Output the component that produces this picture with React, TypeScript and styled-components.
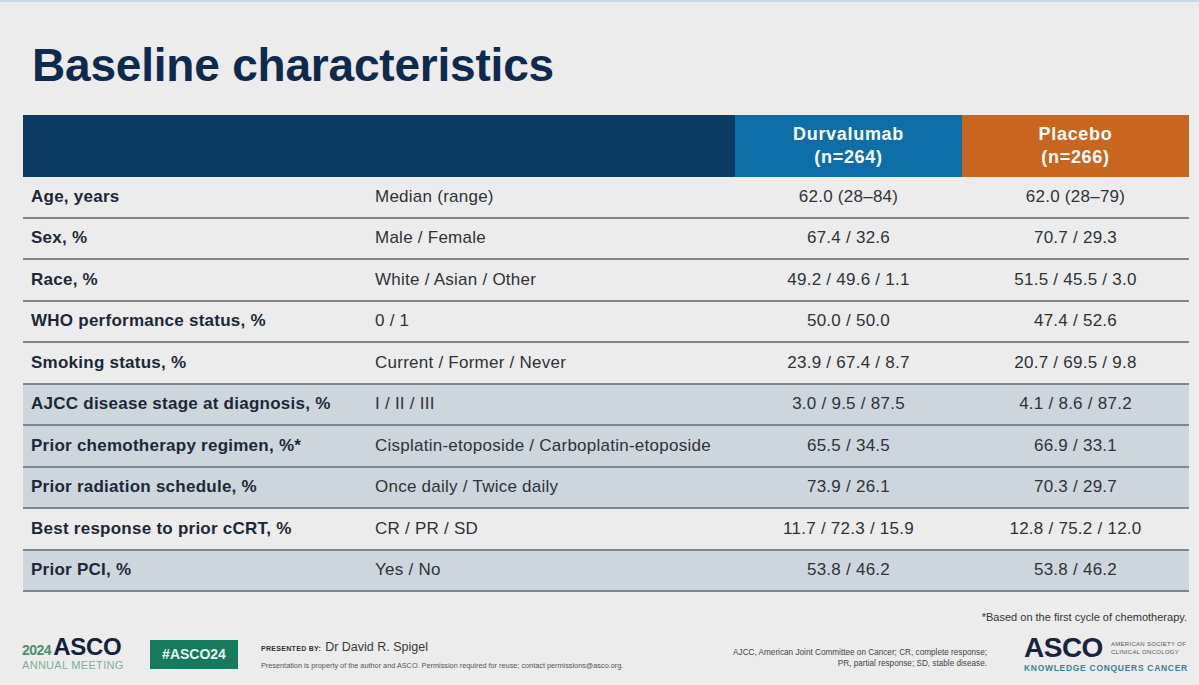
import * as React from 'react'
import styled, { createGlobalStyle } from 'styled-components'

const GlobalStyle = createGlobalStyle`
  html, body {
    margin: 0;
    padding: 0;
    background: #ececec;
  }
  body {
    font-family: "Liberation Sans", Arial, sans-serif;
  }
`

const Slide = styled.div`
  width: 1199px;
  height: 685px;
  box-sizing: border-box;
  border-top: 2px solid #c3d9e8;
  background: #ececec;
  display: flex;
  flex-direction: column;
  overflow: hidden;
`

const Title = styled.h1`
  margin: 36px 0 0 32px;
  font-size: 46px;
  line-height: 54px;
  font-weight: bold;
  color: #0e2a4f;
  letter-spacing: -0.2px;
`

const Table = styled.div`
  margin: 23px 0 0 23px;
  width: 1166px;
  display: grid;
  grid-template-columns: 352px 360px 227px 227px;
`

const HeadCell = styled.div<{ $bg: string }>`
  height: 62px;
  background: ${p => p.$bg};
  color: #fff;
  font-weight: bold;
  font-size: 18px;
  letter-spacing: 0.7px;
  line-height: 23px;
  display: flex;
  flex-direction: column;
  align-items: center;
  justify-content: center;
`

const Blank = styled(HeadCell)`
  grid-column: span 2;
`

const Cell = styled.div<{ $shaded: boolean, $center?: boolean, $bold?: boolean }>`
  height: 39.5px;
  border-bottom: 2px solid #7e8790;
  background: ${p => p.$shaded ? '#cdd5dd' : 'transparent'};
  display: flex;
  align-items: center;
  justify-content: ${p => p.$center ? 'center' : 'flex-start'};
  font-size: 17px;
  letter-spacing: 0.25px;
  font-weight: ${p => p.$bold ? 'bold' : 'normal'};
  color: ${p => p.$bold ? '#1c2838' : '#2e3338'};
  white-space: nowrap;
`

const Label = styled(Cell)`
  padding-left: 8px;
`

const Footnote = styled.div`
  margin: 19px 12px 0 0;
  text-align: right;
  font-size: 11px;
  color: #333;
`

const Footer = styled.div`
  margin-top: 12px;
  padding: 0 10px 0 22px;
  display: flex;
  align-items: center;
`

const MeetingLogo = styled.div`
  display: flex;
  flex-direction: column;
  width: 106px;
`

const MeetingTop = styled.div`
  display: flex;
  align-items: baseline;
  gap: 2px;
`

const Year = styled.span`
  font-size: 14px;
  font-weight: bold;
  color: #4f8e6f;
  letter-spacing: -0.5px;
`

const AscoSmall = styled.span`
  font-size: 24px;
  font-weight: bold;
  color: #14213d;
  letter-spacing: -0.3px;
  line-height: 20px;
`

const AnnualMeeting = styled.span`
  font-size: 11px;
  color: #7fae96;
  letter-spacing: 0.3px;
  margin-top: 1px;
  white-space: nowrap;
`

const Hashtag = styled.div`
  margin-left: 22px;
  width: 88px;
  height: 29px;
  flex-shrink: 0;
  background: #167a5c;
  color: #e9f4ef;
  font-weight: bold;
  font-size: 14px;
  display: flex;
  align-items: center;
  justify-content: center;
`

const Presenter = styled.div`
  margin-left: 23px;
  margin-top: 2px;
  display: flex;
  flex-direction: column;
  gap: 7px;
  color: #333;
`

const PresenterLine = styled.div`
  display: flex;
  align-items: baseline;
  gap: 4px;
`

const PresentedBy = styled.span`
  font-size: 7px;
  font-weight: bold;
  letter-spacing: 0.3px;
`

const PresenterName = styled.span`
  font-size: 12.5px;
  color: #3a3a3a;
`

const Tiny = styled.div`
  font-size: 7.3px;
  color: #555;
  white-space: nowrap;
`

const Abbrev = styled.div`
  margin-left: auto;
  text-align: right;
  font-size: 8.2px;
  line-height: 11px;
  color: #444;
  margin-top: 8px;
  white-space: nowrap;
`

const AscoLogo = styled.div`
  margin-left: 37px;
  display: flex;
  flex-direction: column;
  width: 165px;
`

const AscoTop = styled.div`
  display: flex;
  align-items: center;
  gap: 8px;
`

const AscoBig = styled.span`
  font-size: 28px;
  font-weight: bold;
  color: #1a2340;
  letter-spacing: -0.5px;
  line-height: 26px;
`

const Society = styled.span`
  font-size: 6px;
  line-height: 8px;
  color: #555;
  letter-spacing: 0.3px;
  white-space: nowrap;
`

const Motto = styled.span`
  font-size: 8.5px;
  font-weight: bold;
  color: #3f7f93;
  letter-spacing: 0.7px;
  margin-top: 2px;
  white-space: nowrap;
`

const rows: [string, string, string, string, boolean][] = [
  ['Age, years', 'Median (range)', '62.0 (28–84)', '62.0 (28–79)', false],
  ['Sex, %', 'Male / Female', '67.4 / 32.6', '70.7 / 29.3', false],
  ['Race, %', 'White / Asian / Other', '49.2 / 49.6 / 1.1', '51.5 / 45.5 / 3.0', false],
  ['WHO performance status, %', '0 / 1', '50.0 / 50.0', '47.4 / 52.6', false],
  ['Smoking status, %', 'Current / Former / Never', '23.9 / 67.4 / 8.7', '20.7 / 69.5 / 9.8', false],
  ['AJCC disease stage at diagnosis, %', 'I / II / III', '3.0 / 9.5 / 87.5', '4.1 / 8.6 / 87.2', true],
  ['Prior chemotherapy regimen, %*', 'Cisplatin-etoposide / Carboplatin-etoposide', '65.5 / 34.5', '66.9 / 33.1', true],
  ['Prior radiation schedule, %', 'Once daily / Twice daily', '73.9 / 26.1', '70.3 / 29.7', true],
  ['Best response to prior cCRT, %', 'CR / PR / SD', '11.7 / 72.3 / 15.9', '12.8 / 75.2 / 12.0', false],
  ['Prior PCI, %', 'Yes / No', '53.8 / 46.2', '53.8 / 46.2', true],
]

const App = () => (
  <Slide>
    <GlobalStyle />
    <Title>Baseline characteristics</Title>
    <Table>
      <Blank $bg="#0c3b63" />
      <HeadCell $bg="#0e6ea7">
        <span>Durvalumab</span>
        <span>(n=264)</span>
      </HeadCell>
      <HeadCell $bg="#c8651f">
        <span>Placebo</span>
        <span>(n=266)</span>
      </HeadCell>
      {rows.map(([label, sub, d, p, shaded]) => (
        <React.Fragment key={label}>
          <Label $shaded={shaded} $bold>{label}</Label>
          <Cell $shaded={shaded}>{sub}</Cell>
          <Cell $shaded={shaded} $center>{d}</Cell>
          <Cell $shaded={shaded} $center>{p}</Cell>
        </React.Fragment>
      ))}
    </Table>
    <Footnote>*Based on the first cycle of chemotherapy.</Footnote>
    <Footer>
      <MeetingLogo>
        <MeetingTop>
          <Year>2024</Year>
          <AscoSmall>ASCO</AscoSmall>
        </MeetingTop>
        <AnnualMeeting>ANNUAL MEETING</AnnualMeeting>
      </MeetingLogo>
      <Hashtag>#ASCO24</Hashtag>
      <Presenter>
        <PresenterLine>
          <PresentedBy>PRESENTED BY:</PresentedBy>
          <PresenterName>Dr David R. Spigel</PresenterName>
        </PresenterLine>
        <Tiny>Presentation is property of the author and ASCO. Permission required for reuse; contact permissions@asco.org.</Tiny>
      </Presenter>
      <Abbrev>
        AJCC, American Joint Committee on Cancer; CR, complete response;<br />
        PR, partial response; SD, stable disease.
      </Abbrev>
      <AscoLogo>
        <AscoTop>
          <AscoBig>ASCO</AscoBig>
          <Society>AMERICAN SOCIETY OF<br />CLINICAL ONCOLOGY</Society>
        </AscoTop>
        <Motto>KNOWLEDGE CONQUERS CANCER</Motto>
      </AscoLogo>
    </Footer>
  </Slide>
)

export default App
